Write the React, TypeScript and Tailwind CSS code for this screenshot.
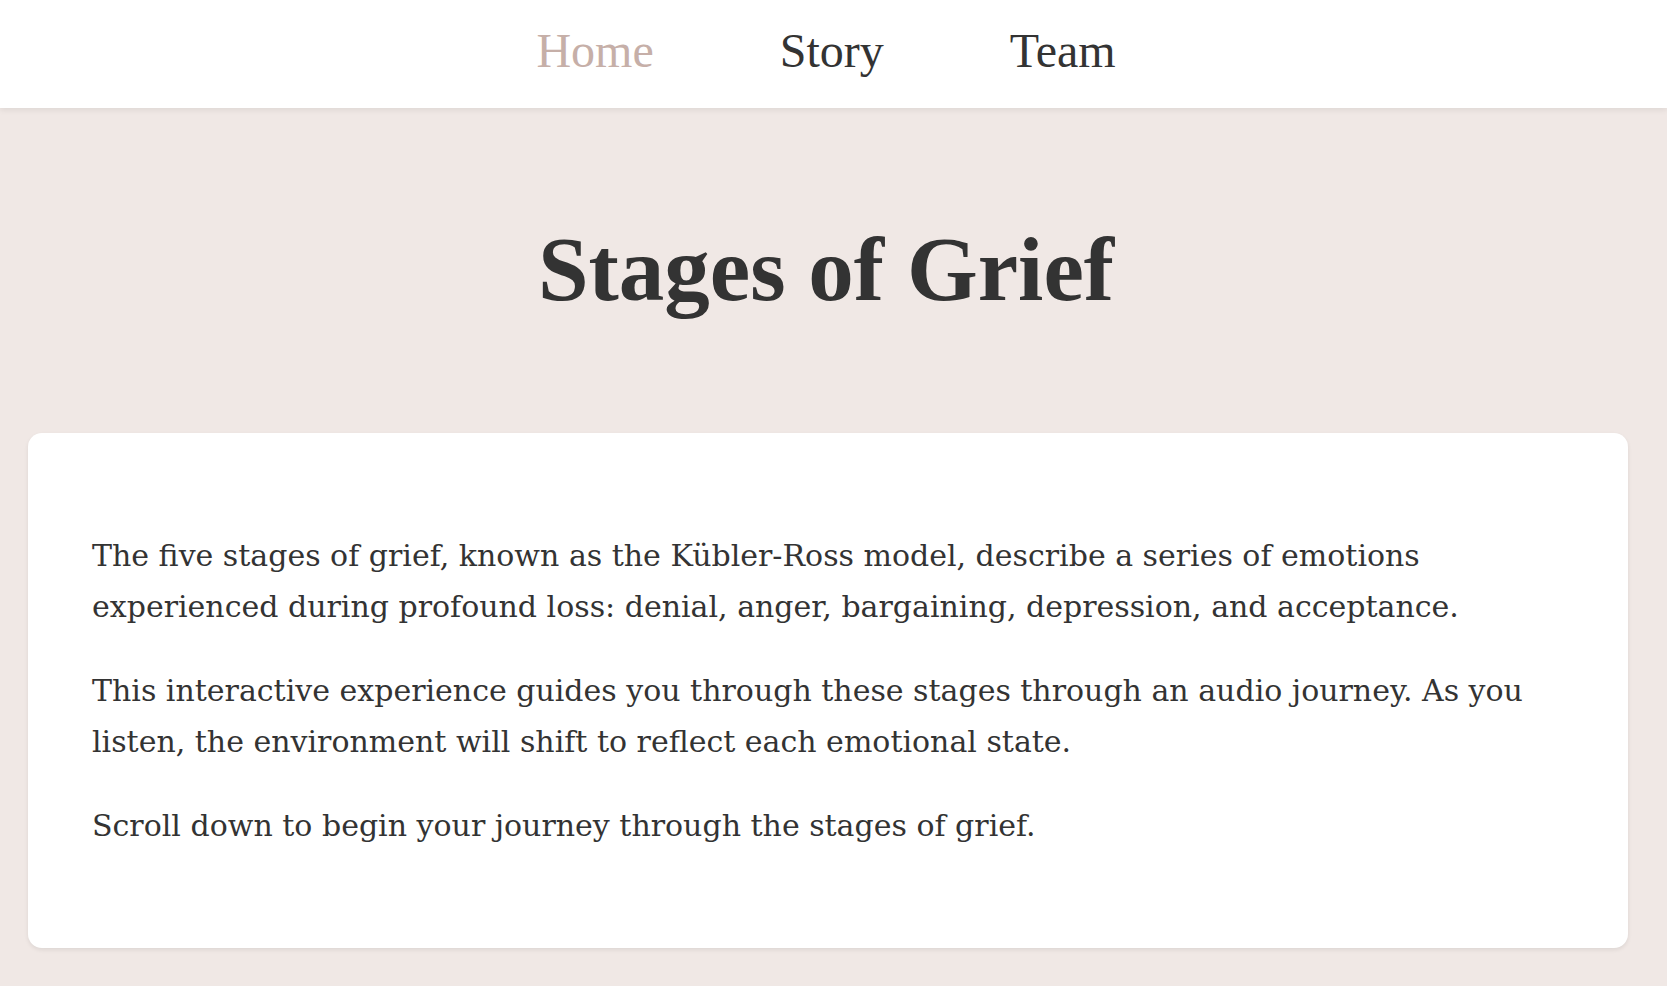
import React from "react";

const links = [
  { label: "Home", active: true },
  { label: "Story", active: false },
  { label: "Team", active: false },
];

const paragraphs = [
  "The five stages of grief, known as the Kübler-Ross model, describe a series of emotions experienced during profound loss: denial, anger, bargaining, depression, and acceptance.",
  "This interactive experience guides you through these stages through an audio journey. As you listen, the environment will shift to reflect each emotional state.",
  "Scroll down to begin your journey through the stages of grief.",
];

const App = () => {
  return (
    <div
      className="min-h-screen bg-[#f0e8e5] text-[#333333]"
      style={{ fontFamily: '"Liberation Serif", "DejaVu Serif", serif' }}
    >
      {/* Top navigation */}
      <nav className="h-[108px] bg-white shadow-[0_2px_6px_rgba(0,0,0,0.08)] pr-[15px]">
        <ul className="h-full flex items-center justify-center gap-[126px] pb-[6px]">
          {links.map((link) => (
            <li key={link.label}>
              <a
                href="#"
                className={
                  link.active
                    ? "text-[48px] leading-none text-[#c6afa8]"
                    : "text-[48px] leading-none text-[#333333]"
                }
              >
                {link.label}
              </a>
            </li>
          ))}
        </ul>
      </nav>

      <main>
        <h1 className="pt-[116px] pb-[118px] pr-[15px] text-center text-[91px] leading-none font-bold text-[#333333]">
          Stages of Grief
        </h1>

        {/* Intro card */}
        <section
          className="ml-[28px] mr-[39px] rounded-[14px] bg-white px-16 py-16 shadow-[0_2px_4px_rgba(0,0,0,0.08)]"
          style={{ fontFamily: '"DejaVu Serif", "Liberation Serif", serif' }}
        >
          {paragraphs.map((text, i) => (
            <p key={i} className="my-[33px] text-[30px] leading-[51px]">
              {text}
            </p>
          ))}
        </section>
      </main>
    </div>
  );
};

export default App;
